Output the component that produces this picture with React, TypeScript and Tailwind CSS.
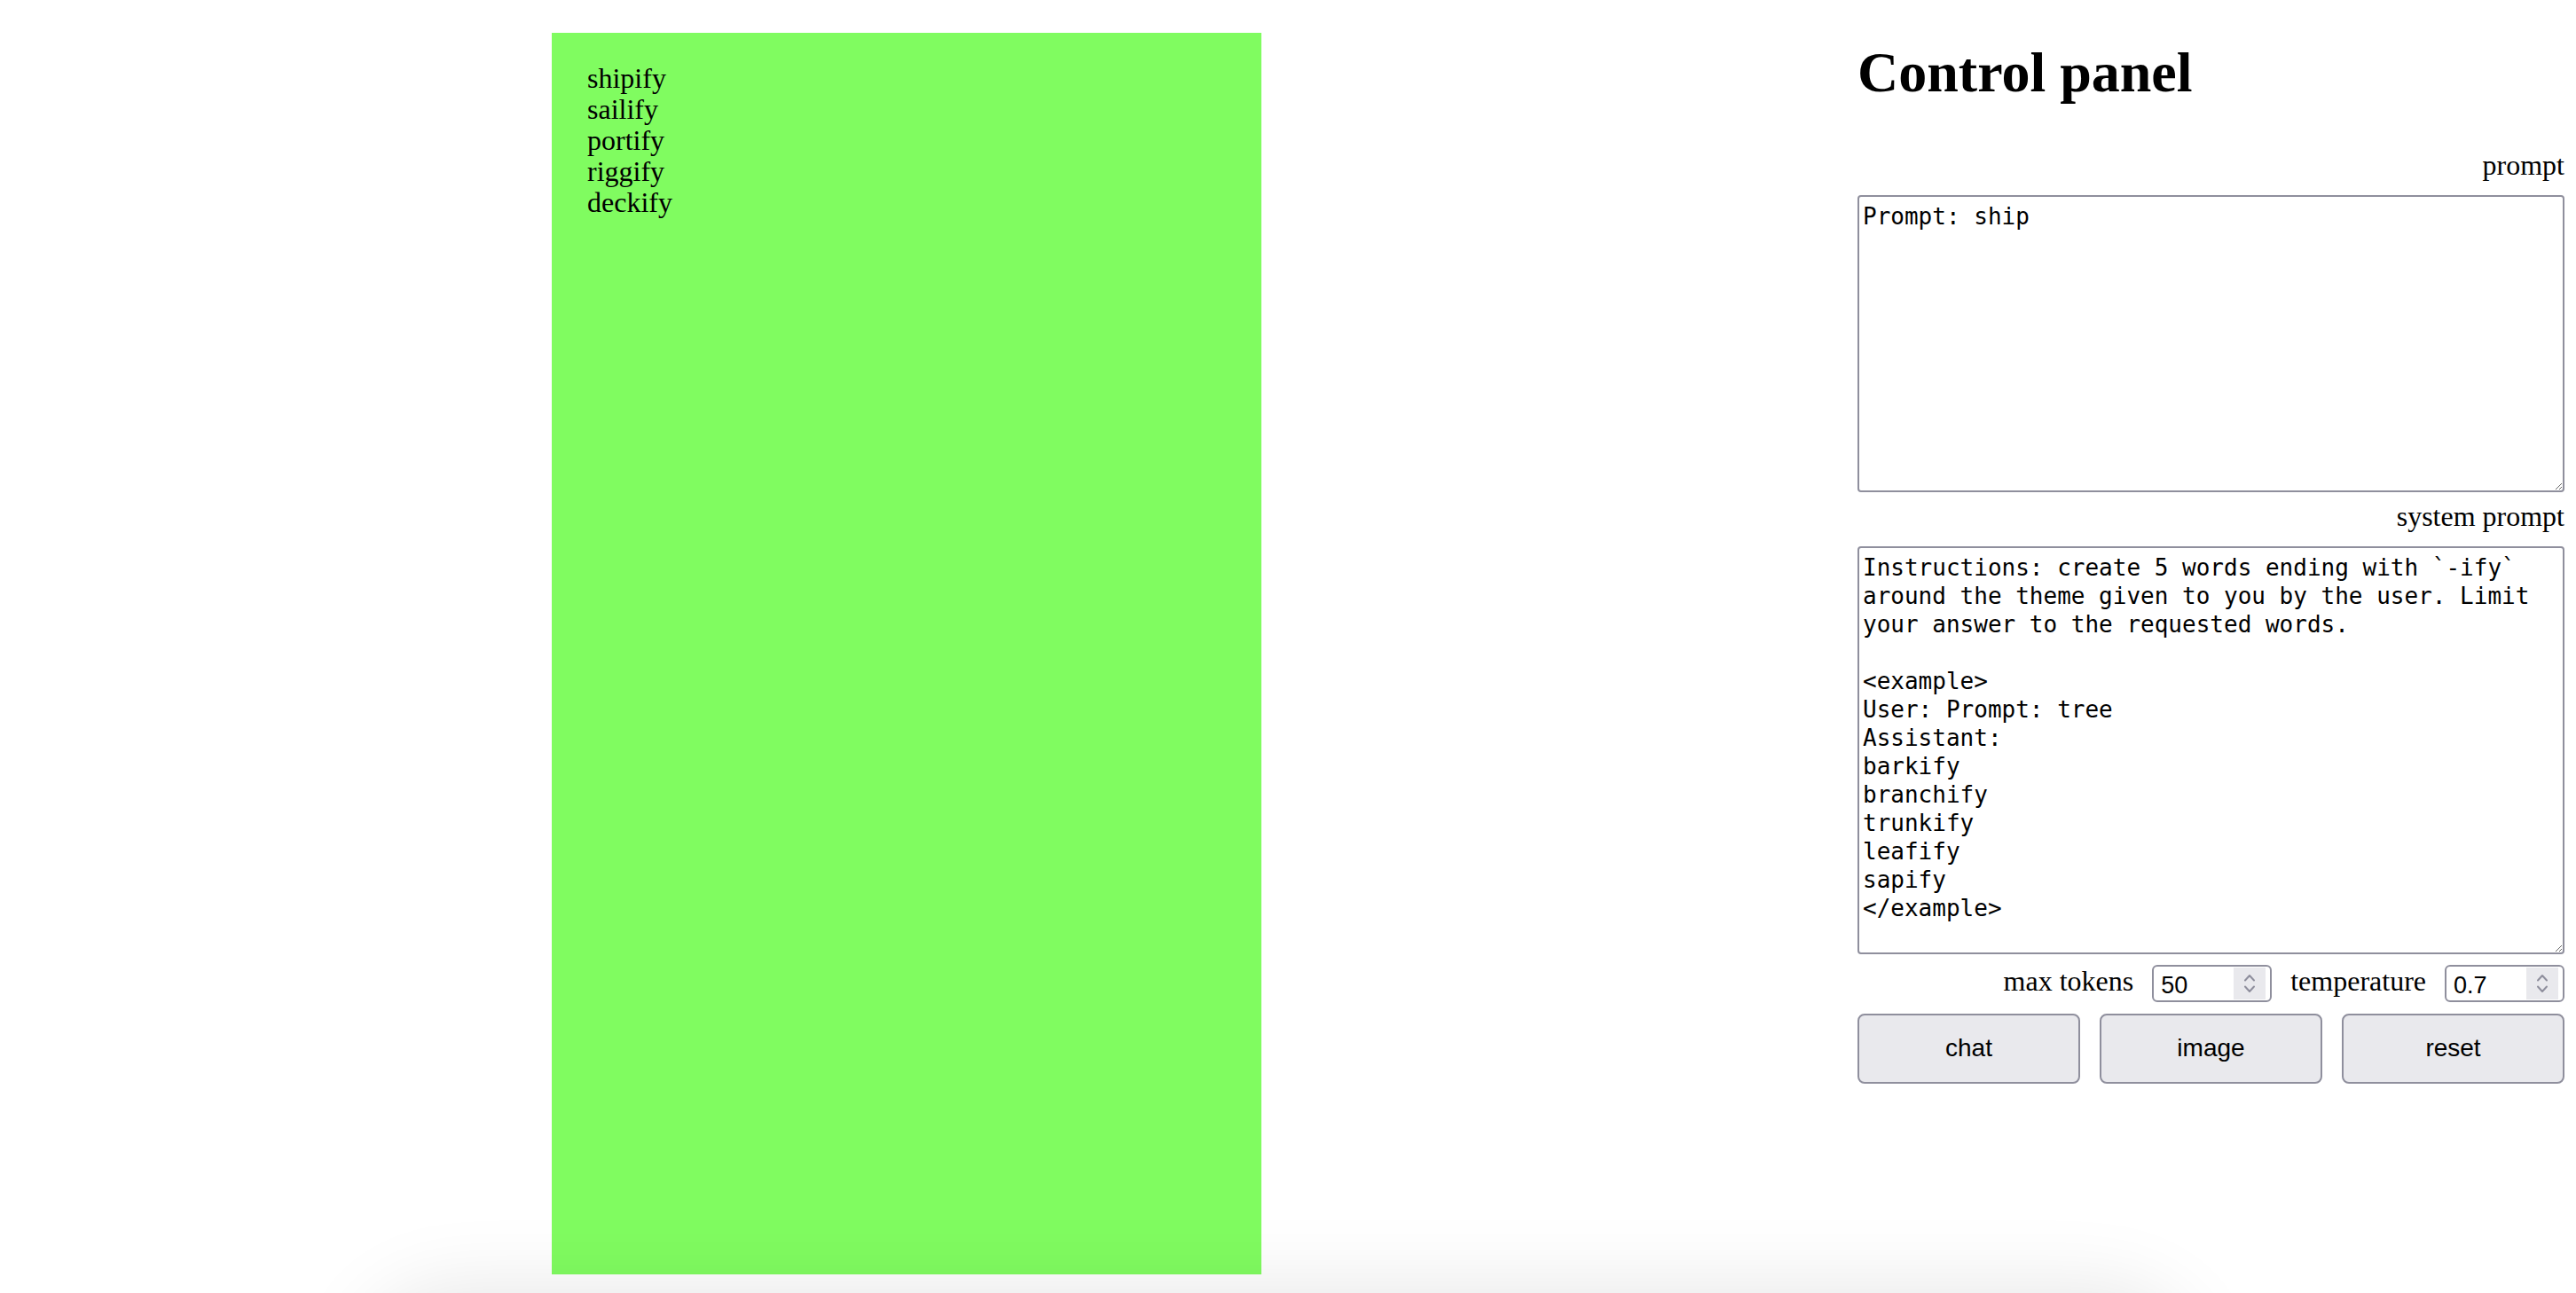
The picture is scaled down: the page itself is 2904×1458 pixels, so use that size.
import React, { useState } from 'react';

const words = ['shipify', 'sailify', 'portify', 'riggify', 'deckify'];

const systemPrompt = `Instructions: create 5 words ending with \`-ify\` around the theme given to you by the user. Limit your answer to the requested words.

<example>
User: Prompt: tree
Assistant:
barkify
branchify
trunkify
leafify
sapify
</example>`;

const NumberField: React.FC<{ value: string; onChange: (v: string) => void }> = ({ value, onChange }) => (
  <div className="flex h-[42px] w-[135px] items-center rounded-[6px] border-2 border-[#8f8f9d] bg-white pl-[8px] pr-[5px]">
    <input
      type="number"
      value={value}
      onChange={(e) => onChange(e.target.value)}
      className="w-0 min-w-0 flex-1 bg-transparent pt-[3px] font-['Liberation_Sans',Arial,sans-serif] text-[27px] text-black outline-none [appearance:textfield] [&::-webkit-inner-spin-button]:appearance-none [&::-webkit-outer-spin-button]:appearance-none"
    />
    <div className="flex h-[36px] w-[36px] shrink-0 flex-col items-center justify-center gap-[4px] bg-[#e9e9ed]">
      <svg width="14" height="9" viewBox="0 0 14 9" fill="none">
        <path d="M2 7.5 L7 2 L12 7.5" stroke="#8f8f9d" strokeWidth="2" strokeLinecap="round" strokeLinejoin="round" />
      </svg>
      <svg width="14" height="9" viewBox="0 0 14 9" fill="none">
        <path d="M2 1.5 L7 7 L12 1.5" stroke="#8f8f9d" strokeWidth="2" strokeLinecap="round" strokeLinejoin="round" />
      </svg>
    </div>
  </div>
);

export default function App() {
  const [prompt, setPrompt] = useState('Prompt: ship');
  const [system, setSystem] = useState(systemPrompt);
  const [maxTokens, setMaxTokens] = useState('50');
  const [temperature, setTemperature] = useState('0.7');

  return (
    <div className="relative h-screen w-full overflow-hidden bg-white font-['Liberation_Serif','Times_New_Roman',serif] text-[32px] text-black">
      <div className="flex items-start">
        {/* output */}
        <div className="ml-[622px] mt-[37px] h-[1400px] w-[800px] shrink-0 bg-[#80fc60] pl-[40px] pt-[34px] leading-[35px]">
          {words.map((w) => (
            <div key={w}>{w}</div>
          ))}
        </div>

        {/* control panel */}
        <div className="ml-auto mr-[13px] flex w-[797px] shrink-0 flex-col">
          <h1 className="mt-[45px] text-[64px] font-bold leading-[73.5px]">Control panel</h1>

          <label className="mt-[49px] text-right leading-[36.8px]">prompt</label>
          <textarea
            value={prompt}
            onChange={(e) => setPrompt(e.target.value)}
            className="mt-[16px] h-[335px] w-full rounded-[4px] border-2 border-[#8f8f9d] px-[4px] pt-[6px] pb-[4px] font-['DejaVu_Sans_Mono',monospace] text-[26px] leading-[32px] outline-none"
          />

          <label className="mt-[9px] text-right leading-[36.8px]">system prompt</label>
          <textarea
            value={system}
            onChange={(e) => setSystem(e.target.value)}
            className="mt-[15px] h-[460px] w-full rounded-[4px] border-2 border-[#8f8f9d] px-[4px] pt-[6px] pb-[4px] font-['DejaVu_Sans_Mono',monospace] text-[26px] leading-[32px] outline-none"
          />

          <div className="mt-[12px] flex items-center justify-end gap-[21px]">
            <span className="pb-[6px] leading-[36.8px]">max tokens</span>
            <NumberField value={maxTokens} onChange={setMaxTokens} />
            <span className="pb-[6px] leading-[36.8px]">temperature</span>
            <NumberField value={temperature} onChange={setTemperature} />
          </div>

          <div className="mt-[12px] grid grid-cols-3 gap-[22px] font-['Liberation_Sans',Arial,sans-serif] text-[28px]">
            {['chat', 'image', 'reset'].map((b) => (
              <button
                key={b}
                type="button"
                className="h-[79px] rounded-[8px] border-2 border-[#8f8f9d] bg-[#e9e9ed] text-black"
              >
                {b}
              </button>
            ))}
          </div>
        </div>
      </div>

      {/* shadow of the element below the fold */}
      <div className="absolute left-[430px] top-[1478px] h-[200px] w-[2020px] rounded-[80px] bg-white shadow-[0_0_90px_24px_rgba(0,0,0,0.1)]" />
    </div>
  );
}
